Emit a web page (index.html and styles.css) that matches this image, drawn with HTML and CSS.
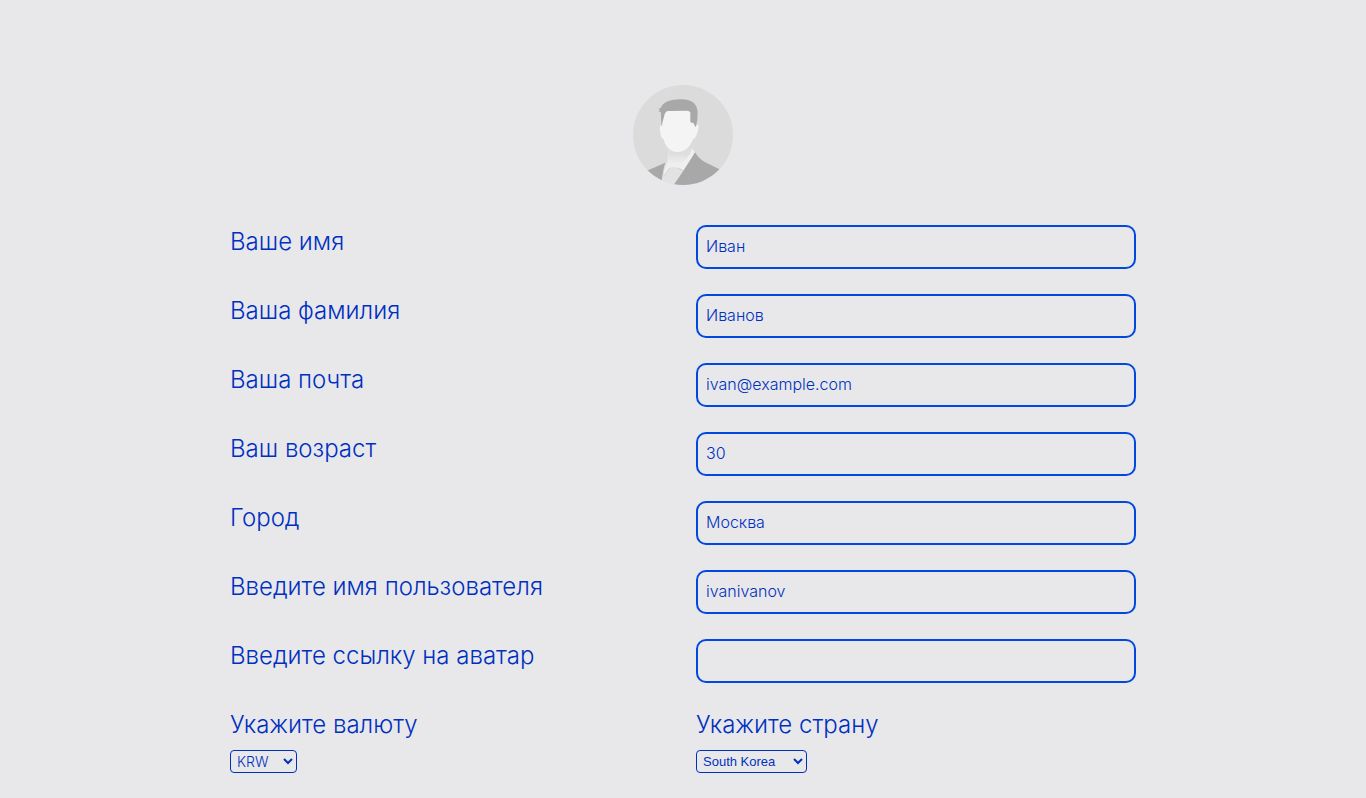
FILE: index.html
```html
<!DOCTYPE html>
<html lang="ru">
<head>
<meta charset="utf-8">
<meta name="viewport" content="width=device-width, initial-scale=1">
<title>Профиль</title>
<link rel="stylesheet" href="styles.css">
</head>
<body>
<main class="profile">
  <svg class="avatar" viewBox="0 0 300 300" role="img" aria-label="Аватар">
    <defs>
      <clipPath id="disc"><circle cx="150" cy="150" r="150"/></clipPath>
      <linearGradient id="neck" x1="0" y1="0" x2="0" y2="1">
        <stop offset="0.25" stop-color="#dedede"/>
        <stop offset="0.75" stop-color="#eeeeee"/>
      </linearGradient>
    </defs>
    <g clip-path="url(#disc)">
      <rect width="300" height="300" fill="#dbdbdb"/>
      <path d="M86 300L94 254Q106 234 105 194L178 190Q182 200 188 204L180 250L124 300Z" fill="#e6e6e6"/>
      <path d="M107 190H176V218L136 250L108 246Z" fill="url(#neck)"/>
      <path d="M86 300L94 256L104 232L108 252L118 246L132 248L150 254L124 300Z" fill="#e2e2e2"/>
      <path d="M94 256L104 230L110 222L109 250L94 274Z" fill="#efefef"/>
      <path d="M109 250L94 274M132 248L150 257" fill="none" stroke="#d2d2d2" stroke-width="3"/>
      <path d="M178 190L186 203L152 254L132 246Q168 224 178 190Z" fill="#f0f0f0"/>
      <path d="M40 258L97 233Q90 250 84 300H40Z" fill="#a8a8a8"/>
      <path d="M186 202Q200 224 214 230L270 258L220 300H122Q160 246 186 202Z" fill="#a8a8a8"/>
      <path d="M84 122C78 118 81 140 84 154Q87 162 92 163C96 184 111 201 134 201C160 201 174 181 180 162C190 164 198 126 197 122Q192 117 188 126L181 76Q134 70 91 78L88 124Z" fill="#f4f4f4"/>
      <path d="M86 124Q83 103 84 82L77 80L81 76L76 72L83 69C90 50 117 42 145 43C174 43 192 55 194 80Q195 104 188 127L181 114L172 112V83Q170 77 163 77L105 78Q95 79 93 96Q88 110 86 124Z" fill="#a8a8a8"/>
    </g>
  </svg>
  <form class="form">
    <label class="label" for="name">Ваше имя</label>
    <input class="field" id="name" type="text" value="Иван">
    <label class="label" for="surname">Ваша фамилия</label>
    <input class="field" id="surname" type="text" value="Иванов">
    <label class="label" for="email">Ваша почта</label>
    <input class="field" id="email" type="email" value="ivan@example.com">
    <label class="label" for="age">Ваш возраст</label>
    <input class="field" id="age" type="text" inputmode="numeric" value="30">
    <label class="label" for="city">Город</label>
    <input class="field" id="city" type="text" value="Москва">
    <label class="label" for="username">Введите имя пользователя</label>
    <input class="field" id="username" type="text" value="ivanivanov">
    <label class="label" for="avatar">Введите ссылку на аватар</label>
    <input class="field" id="avatar" type="url">
    <div class="choice">
      <label class="label" for="currency">Укажите валюту</label>
      <select class="select select-currency" id="currency">
        <option>KRW</option>
        <option>USD</option>
        <option>EUR</option>
        <option>RUB</option>
      </select>
    </div>
    <div class="choice">
      <label class="label" for="country">Укажите страну</label>
      <select class="select select-country" id="country">
        <option>South Korea</option>
        <option>Russia</option>
        <option>Germany</option>
      </select>
    </div>
  </form>
</main>
</body>
</html>
```
FILE: styles.css
```css
* {
  box-sizing: border-box;
}

body {
  margin: 0;
  background: #e8e8ea;
  color: #0030c0;
  font-family: Inter, "Liberation Sans", sans-serif;
  font-weight: 300;
}

.profile {
  display: flex;
  flex-direction: column;
  align-items: center;
  gap: 40px;
  max-width: 946px;
  margin: 0 auto;
  padding: 85px 20px 25px;
}

.avatar {
  width: 100px;
  height: 100px;
}

.form {
  display: grid;
  grid-template-columns: 1fr 1fr;
  gap: 25px 26px;
  width: 100%;
}

.label {
  font-size: 24px;
  line-height: 33px;
}

.field {
  width: 100%;
  height: 44px;
  padding: 0 8px 2px;
  border: 2px solid #0048e0;
  border-radius: 10px;
  background: transparent;
  color: inherit;
  font: inherit;
  font-size: 16px;
}

.choice {
  display: flex;
  flex-direction: column;
  align-items: flex-start;
  gap: 9px;
}

.select {
  height: 23px;
  padding: 0 2px;
  border: 1px solid #0030c0;
  border-radius: 4px;
  background: transparent;
  color: inherit;
}

.select-currency {
  width: 67px;
  font: inherit;
  font-size: 14px;
}

.select-country {
  width: 111px;
  font-family: "Liberation Sans", sans-serif;
  font-size: 13px;
}
```
